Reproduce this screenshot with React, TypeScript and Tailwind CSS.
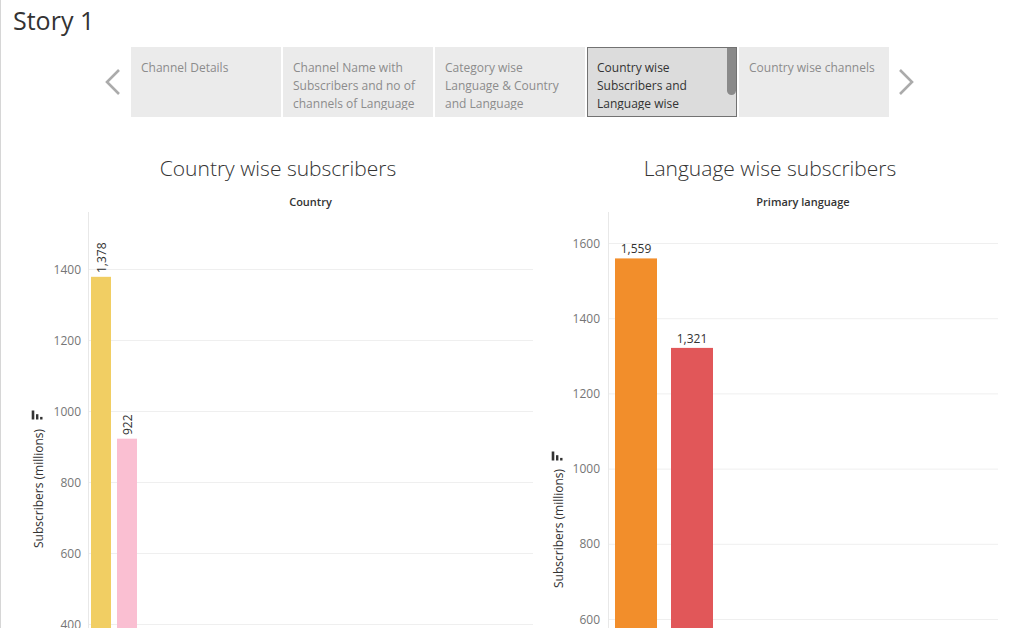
import React from "react";

const tabs = [
  "Channel Details",
  "Channel Name with Subscribers and no of channels of Language",
  "Category wise Language & Country and Language",
  "Country wise Subscribers and Language wise",
  "Country wise channels",
];

function Chevron({ dir }: { dir: "left" | "right" }) {
  const pts = dir === "left" ? "14,1 2,13 14,25" : "2,1 14,13 2,25";
  return (
    <svg width="16" height="26" viewBox="0 0 16 26">
      <polyline points={pts} fill="none" stroke="#ababab" strokeWidth="2.6" />
    </svg>
  );
}

function SortIcon({ x, y }: { x: number; y: number }) {
  return (
    <g fill="#333">
      <rect x={x} y={y - 9} width={2.6} height={9} />
      <rect x={x + 4.3} y={y - 5.3} width={2.4} height={5.3} />
      <rect x={x + 8.4} y={y - 2.6} width={2.4} height={2.6} />
    </g>
  );
}

function LeftChart() {
  const yOf = (v: number) => 624 - ((v - 400) * 71) / 200;
  const ticks = [1400, 1200, 1000, 800, 600, 400];
  return (
    <svg width="539" height="416" viewBox="1 212 539 416" className="block">
      {ticks.map((t) => (
        <g key={t}>
          <line x1={88} x2={533} y1={yOf(t) + 0.5} y2={yOf(t) + 0.5} stroke="#efefef" strokeWidth="1" />
          <text x={81} y={yOf(t) + 4.5} textAnchor="end" fontSize="12" fill="#767676">
            {t}
          </text>
        </g>
      ))}
      <line x1={88.5} x2={88.5} y1={212} y2={628} stroke="#e8e8e8" strokeWidth="1" />
      <rect x={91} y={yOf(1378)} width={20} height={628 - yOf(1378)} fill="#f1ce63" />
      <rect x={117} y={yOf(922)} width={20} height={628 - yOf(922)} fill="#fabfd2" />
      <text transform="translate(105.7 273) rotate(-90)" fontSize="12" fill="#333">
        1,378
      </text>
      <text transform="translate(131.5 435) rotate(-90)" fontSize="12" fill="#333">
        922
      </text>
      <SortIcon x={31.7} y={419.5} />
      <text transform="translate(42.7 548) rotate(-90)" fontSize="12" fill="#333">
        Subscribers (millions)
      </text>
    </svg>
  );
}

function RightChart() {
  const yOf = (v: number) => 619 - ((v - 600) * 75.2) / 200;
  const ticks = [1600, 1400, 1200, 1000, 800, 600];
  return (
    <svg width="478" height="416" viewBox="540 212 478 416" className="block">
      {ticks.map((t) => (
        <g key={t}>
          <line x1={608} x2={998} y1={yOf(t) + 0.5} y2={yOf(t) + 0.5} stroke="#efefef" strokeWidth="1" />
          <text x={600} y={yOf(t) + 4.5} textAnchor="end" fontSize="12" fill="#767676">
            {t}
          </text>
        </g>
      ))}
      <line x1={608.5} x2={608.5} y1={212} y2={628} stroke="#e8e8e8" strokeWidth="1" />
      <rect x={615} y={yOf(1559)} width={42} height={628 - yOf(1559)} fill="#f28e2b" />
      <rect x={671} y={yOf(1321)} width={42} height={628 - yOf(1321)} fill="#e15759" />
      <text x={636} y={252.5} textAnchor="middle" fontSize="12" fill="#333">
        1,559
      </text>
      <text x={692} y={342.5} textAnchor="middle" fontSize="12" fill="#333">
        1,321
      </text>
      <SortIcon x={551.7} y={460.5} />
      <text transform="translate(562.7 588) rotate(-90)" fontSize="12" fill="#333">
        Subscribers (millions)
      </text>
    </svg>
  );
}

export default function App() {
  return (
    <div className="w-[1018px] h-[628px] overflow-hidden bg-white border-l border-[#d6d6d6] font-['Open_Sans',sans-serif] text-[#333]">
      <div className="h-[47px] pt-[4px] pl-[12px] text-[25px] leading-[32px] text-[#333]">Story 1</div>
      <div className="flex h-[70px] items-center">
        <div className="w-[130px] h-full flex items-center justify-end pr-[10px]">
          <Chevron dir="left" />
        </div>
        <div className="flex h-full gap-[2px]">
          {tabs.map((t, i) => {
            const sel = i === 3;
            return (
              <div
                key={i}
                className={
                  sel
                    ? "relative w-[150px] h-full bg-[#dcdcdc] border border-[#727272] pl-[9px] pr-[9px] pt-[11px]"
                    : "relative w-[150px] h-full bg-[#ebebeb] pl-[10px] pr-[10px] pt-[12px]"
                }
              >
                <div
                  className={
                    sel
                      ? "h-[51px] overflow-hidden text-[12px] leading-[18px] text-[#333]"
                      : "h-[51px] overflow-hidden text-[12px] leading-[18px] text-[#8c8c8c]"
                  }
                >
                  {t}
                </div>
                {sel && (
                  <div className="absolute right-0 top-0 w-[9px] h-[47px] rounded-b-full rounded-t-[3px] bg-[#8a8a8a]" />
                )}
              </div>
            );
          })}
        </div>
        <div className="h-full flex items-center pl-[9px]">
          <Chevron dir="right" />
        </div>
      </div>
      <div className="flex">
        <div className="w-[539px]">
          <div className="ml-[19px] w-[516px] mt-[37px] text-center text-[21px] leading-[28px] font-light text-[#333]">
            Country wise subscribers
          </div>
          <div className="ml-[87px] w-[445px] mt-[12px] text-center text-[11px] leading-[16px] font-semibold text-[#333]">
            Country
          </div>
          <div className="mt-[2px]">
            <LeftChart />
          </div>
        </div>
        <div className="w-[478px]">
          <div className="ml-[2px] w-[456px] mt-[37px] text-center text-[21px] leading-[28px] font-light text-[#333]">
            Language wise subscribers
          </div>
          <div className="ml-[68px] w-[390px] mt-[12px] text-center text-[11px] leading-[16px] font-semibold text-[#333]">
            Primary language
          </div>
          <div className="mt-[2px]">
            <RightChart />
          </div>
        </div>
      </div>
    </div>
  );
}
